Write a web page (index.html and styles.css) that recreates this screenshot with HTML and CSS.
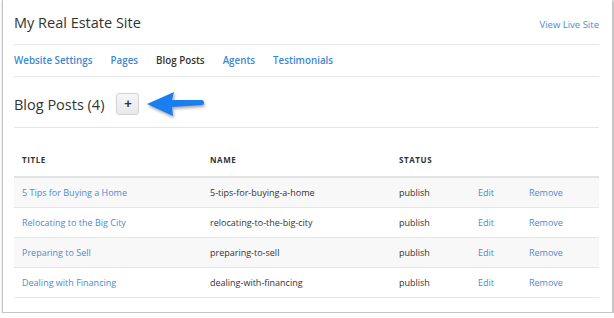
FILE: index.html
```html
<!DOCTYPE html>
<html lang="en">
<head>
<meta charset="utf-8"/>
<title>My Real Estate Site</title>
<meta content="width=device-width, initial-scale=1" name="viewport"/>
<link rel="stylesheet" href="styles.css">
</head>
<body>
<div class="panel">
  <!-- Шапка -->
  <div class="site-head">
    <h1>My Real Estate Site</h1>
    <a class="live-link" href="#">View Live Site</a>
  </div>
  <nav class="tabs">
    <a href="#">Website Settings</a>
    <a href="#">Pages</a>
    <a href="#" class="active">Blog Posts</a>
    <a href="#">Agents</a>
    <a href="#">Testimonials</a>
  </nav>

  <div class="section-head">
    <h2>Blog Posts (4)</h2>
    <button class="add-btn">+</button>
    <svg class="arrow" width="62" height="30" viewBox="0 0 62 30">
      <path d="M2 14 L29 2 L27 10 L57 10 Q59 10 59 12.5 Q59 15 57 15 L27 17 L28 26 Z" fill="#1b7ef0"/>
    </svg>
  </div>

  <table class="posts">
    <thead>
      <tr><th class="c-title">Title</th><th class="c-name">Name</th><th class="c-status">Status</th><th class="c-edit"></th><th></th></tr>
    </thead>
    <tbody>
      <tr><td><a href="#">5 Tips for Buying a Home</a></td><td>5-tips-for-buying-a-home</td><td>publish</td><td><a href="#">Edit</a></td><td><a href="#">Remove</a></td></tr>
      <tr><td><a href="#">Relocating to the Big City</a></td><td>relocating-to-the-big-city</td><td>publish</td><td><a href="#">Edit</a></td><td><a href="#">Remove</a></td></tr>
      <tr><td><a href="#">Preparing to Sell</a></td><td>preparing-to-sell</td><td>publish</td><td><a href="#">Edit</a></td><td><a href="#">Remove</a></td></tr>
      <tr><td><a href="#">Dealing with Financing</a></td><td>dealing-with-financing</td><td>publish</td><td><a href="#">Edit</a></td><td><a href="#">Remove</a></td></tr>
    </tbody>
  </table>
</div>
</body>
</html>
```

FILE: styles.css
```css
body {
    margin: 0;
    background: #fff;
    color: #333;
    font-family: 'Open Sans', sans-serif;
}

a {
    color: #4a8bd2;
    text-decoration: none;
}

.panel {
    box-sizing: border-box;
    width: 611px;
    height: 314px;
    margin: -1px 0 0 2px;
    padding: 0 13px 0 11px;
    border: 1px solid #c4c4c4;
    box-shadow: 1px 2px 3px rgba(0,0,0,0.35);
    background: #fff;
}

.site-head {
    height: 44px;
    display: flex;
    align-items: center;
    justify-content: space-between;
    border-bottom: 1px solid #e6e6e6;
}

.site-head h1 {
    margin: 0;
    font-size: 14.5px;
    font-weight: 400;
    color: #333;
}

.live-link {
    font-size: 9.5px;
    margin-top: 5px;
}

.tabs {
    height: 31px;
    display: flex;
    align-items: center;
    gap: 18px;
    border-bottom: 1px solid #e6e6e6;
}

.tabs a {
    font-size: 9.8px;
    font-weight: 600;
    color: #3d87d4;
}

.tabs a.active {
    color: #333;
}

.section-head {
    height: 50px;
    display: flex;
    align-items: center;
    border-bottom: 1px solid #e6e6e6;
}

.section-head h2 {
    margin: 4px 0 0;
    font-size: 14.5px;
    font-weight: 400;
}

.add-btn {
    width: 23px;
    height: 22px;
    margin: 4px 0 0 12px;
    padding: 0;
    border: 1px solid #d2d2d2;
    border-radius: 3px;
    background: linear-gradient(#f6f6f6, #e9e9e9);
    font-size: 13px;
    font-weight: 700;
    color: #333;
    line-height: 18px;
}

.arrow {
    margin: 5px 0 0 6px;
    filter: drop-shadow(1px 2px 1.5px rgba(0,0,0,0.35));
}

.posts {
    width: 100%;
    margin-top: 16px;
    border-collapse: collapse;
    font-size: 9px;
}

.posts th {
    height: 30px;
    padding: 0 8px 2px;
    text-align: left;
    font-size: 8px;
    font-weight: 700;
    letter-spacing: 0.6px;
    text-transform: uppercase;
    border-bottom: 2px solid #e2e2e2;
    color: #333;
}

.posts td {
    height: 28px;
    padding: 0 8px 1px;
    border-bottom: 1px solid #e6e6e6;
}

.posts tbody tr:nth-child(odd) {
    background: #f8f8f8;
}

.c-title { width: 172px; }
.c-name { width: 173px; }
.c-status { width: 63px; }
.c-edit { width: 35px; }
```
